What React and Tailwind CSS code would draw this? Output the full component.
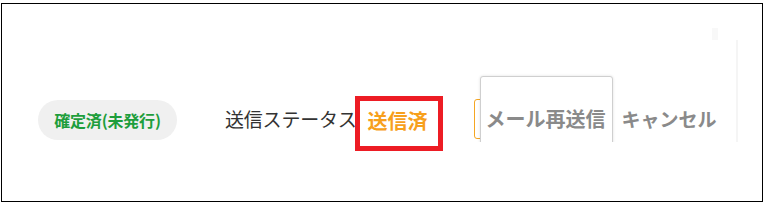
import React from "react";

export default function App() {
  const font = { fontFamily: '"Noto Sans CJK JP", "Noto Sans", sans-serif' };
  return (
    <div className="relative w-[768px] h-[206px] bg-white overflow-hidden" style={font}>
      <div className="ml-[1px] mt-[3px] w-[762px] h-[199px] border border-black">
        <div className="pt-[16px]">
          <div className="relative h-[122px] w-[736px] overflow-hidden flex items-end pb-[2px] pl-[36px]">
            {/* faint decorations on right */}
            <div className="absolute right-0 top-[20px] bottom-0 w-[2px] bg-[#f5f5f5]" />
            <div className="absolute left-[710px] top-[8px] w-[6px] h-[12px] bg-[#f8f8f8]" />

            {/* pill */}
            <div className="w-[139px] h-[40px] rounded-full bg-[#f0f0f0] flex items-center justify-center shrink-0">
              <span className="text-[16px] font-bold text-[#1e9e3c] leading-none tracking-[-0.2px]">確定済(未発行)</span>
            </div>

            {/* label */}
            <div className="ml-[48px] h-[40px] flex items-center shrink-0">
              <span className="text-[19px] leading-none text-[#333333] mt-[-3px] tracking-[-0.2px]">送信ステータス</span>
            </div>
            <div className="ml-[11px] h-[40px] flex items-center shrink-0">
              <span className="text-[20px] font-bold leading-none text-[#f7a01c] mt-[2px]">送信済</span>
            </div>

            {/* button with overlay card */}
            <div className="relative ml-[46px] w-[139px] h-[40px] mb-[1px] border border-[#f5a623] rounded-[3px] shrink-0">
              <div className="absolute left-[5px] top-[-24px] w-[133px] h-[90px] bg-white border border-[#cfcfcf] rounded-[3px] shadow-[0_0_3px_rgba(0,0,0,0.12)] pl-[5px] pt-[32px]">
                <span className="block text-[20px] font-bold leading-[20px] text-[#8a8a8a] whitespace-nowrap">メール再送信</span>
              </div>
            </div>
            <div className="ml-[9px] h-[40px] flex items-center shrink-0">
              <span className="text-[19px] font-bold leading-none text-[#8a8a8a] mt-[-3px]">キャンセル</span>
            </div>
          </div>
        </div>
      </div>

      {/* red annotation box */}
      <div className="absolute left-[355px] top-[96px] w-[88px] h-[55px] border-[5px] border-[#ed1c24]" />
    </div>
  );
}
